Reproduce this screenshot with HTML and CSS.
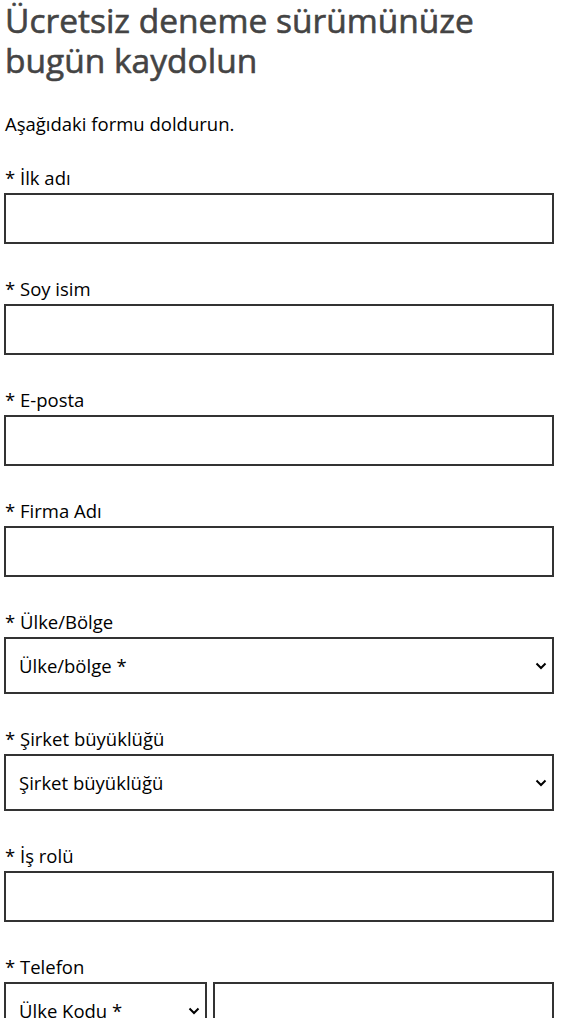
FILE: index.html
```html
<!DOCTYPE html>
<html lang="tr">
<head>
<meta charset="utf-8">
<link rel="stylesheet" href="styles.css">
</head>
<body>
<main class="page">
  <h1 class="title">Ücretsiz deneme sürümünüze bugün kaydolun</h1>
  <p class="intro">Aşağıdaki formu doldurun.</p>
  <form class="form">
    <div class="field">
      <label class="label">* İlk adı</label>
      <input class="input" type="text">
    </div>
    <div class="field">
      <label class="label">* Soy isim</label>
      <input class="input" type="text">
    </div>
    <div class="field">
      <label class="label">* E-posta</label>
      <input class="input" type="text">
    </div>
    <div class="field">
      <label class="label">* Firma Adı</label>
      <input class="input" type="text">
    </div>
    <div class="field">
      <label class="label">* Ülke/Bölge</label>
      <div class="select-wrap">
        <select class="select"><option>Ülke/bölge *</option></select>
        <svg class="chev" width="12" height="8" viewBox="0 0 12 8"><path d="M1.5 1.5 L6 6 L10.5 1.5" fill="none" stroke="#000" stroke-width="2"/></svg>
      </div>
    </div>
    <div class="field">
      <label class="label">* Şirket büyüklüğü</label>
      <div class="select-wrap">
        <select class="select"><option>Şirket büyüklüğü</option></select>
        <svg class="chev" width="12" height="8" viewBox="0 0 12 8"><path d="M1.5 1.5 L6 6 L10.5 1.5" fill="none" stroke="#000" stroke-width="2"/></svg>
      </div>
    </div>
    <div class="field">
      <label class="label">* İş rolü</label>
      <input class="input" type="text">
    </div>
    <div class="field">
      <label class="label">* Telefon</label>
      <div class="tel-row">
        <div class="select-wrap code">
          <select class="select"><option>Ülke Kodu *</option></select>
          <svg class="chev" width="12" height="8" viewBox="0 0 12 8"><path d="M1.5 1.5 L6 6 L10.5 1.5" fill="none" stroke="#000" stroke-width="2"/></svg>
        </div>
        <input class="input tel" type="text">
      </div>
    </div>
  </form>
</main>
</body>
</html>
```
FILE: styles.css
```css
html, body {
  margin: 0;
  padding: 0;
  background: #fff;
}
body {
  font-family: "Open Sans", "Noto Sans", "Liberation Sans", sans-serif;
  color: #000;
}
.page {
  width: 550px;
  padding: 0 4px;
}
.title {
  margin: 0;
  font-size: 33.5px;
  line-height: 40px;
  font-weight: 400;
  color: #444;
  -webkit-text-stroke: 0.6px #444;
  padding-left: 1px;
}
.intro {
  margin: 32px 0 0 1px;
  font-size: 18.5px;
  line-height: 24px;
}
.form {
  margin-top: 27px;
}
.field {
  margin-bottom: 30px;
}
.label {
  display: block;
  font-size: 18.5px;
  line-height: 30px;
  padding-left: 1px;
}
.input {
  display: block;
  box-sizing: border-box;
  width: 100%;
  height: 51px;
  margin: 0;
  border: 2px solid #333;
  border-radius: 0;
  background: #fff;
  font: inherit;
  padding: 0 14px;
}
.select-wrap {
  position: relative;
}
.select {
  display: block;
  box-sizing: border-box;
  width: 100%;
  height: 57px;
  margin: 0;
  border: 2px solid #333;
  border-radius: 0;
  background: #fff;
  appearance: none;
  -webkit-appearance: none;
  font-family: inherit;
  font-size: 18.5px;
  color: #000;
  padding: 0 40px 0 13px;
}
.chev {
  position: absolute;
  right: 7px;
  top: 25px;
  pointer-events: none;
}
.tel-row {
  display: flex;
  gap: 6px;
}
.select-wrap.code {
  width: 203px;
  flex: none;
}
.input.tel {
  flex: 1;
  width: auto;
}
```
